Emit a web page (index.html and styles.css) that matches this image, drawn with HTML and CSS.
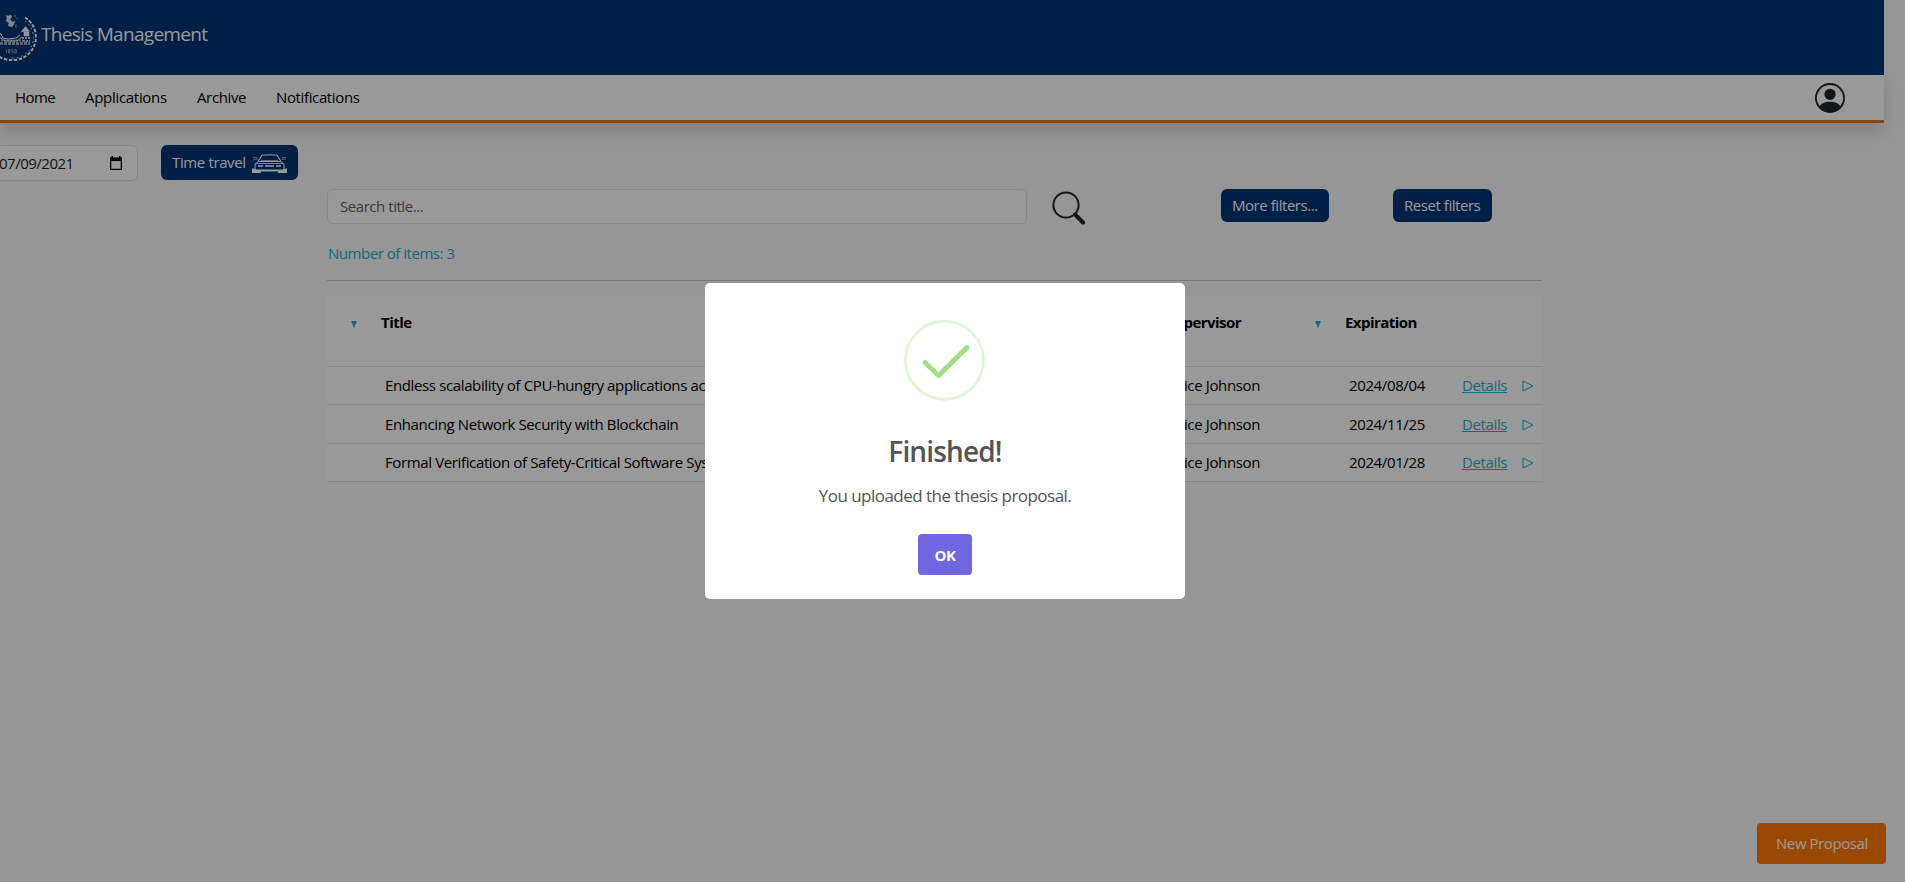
FILE: index.html
```html
<!DOCTYPE html>
<html lang="en">
<head>
<meta charset="utf-8">
<title>Thesis Management</title>
<link rel="stylesheet" href="styles.css">
</head>
<body>
<header class="topbar">
  <svg class="crest" width="50" height="50" viewBox="0 0 50 50" fill="none" stroke="#fff">
    <path d="M38 5.500A23 23 0 0 1 24 48A23 23 0 0 1 12 5.500" stroke-width="2" stroke-dasharray="3.400 1.600"/>
    <path d="M38 9A20.500 20.500 0 0 1 24 46" stroke-width="1" stroke-dasharray="1.600 3"/>
    <path d="M19 3l2 1 3-1 1 2-2 2 2 3 3-1-1 3-2 3-4-1 1-3-3-2 1-3z" fill="#fff" stroke-width=".3" opacity=".85"/>
    <path d="M28 3v2M29 12v4M30 6v1" stroke-width="1" opacity=".6"/>
    <path d="M5 22v-3M10 20l4 2 2 4 5 1 8-1 4-3M9 25l5 1 4 3h12l5-4" stroke-width="1"/>
    <path d="M5 31.500h38" stroke-width="2.800" stroke-dasharray="3 1" opacity=".6"/>
    <path d="M8 28.500h28" stroke-width="2" stroke-dasharray="2 1" opacity=".6"/>
    <path d="M34.500 19.500l4-5 4 5zM37 20v4h5v-4" fill="#fff" stroke-width=".6"/>
    <path d="M35 26h8M36 29h7" stroke-width="2" stroke-dasharray="2 1" opacity=".8"/>
    <path d="M19.500 37.500v3.500M21.500 37.500h1.500v3.500h-1.500zM26 37.500h-1.200v1.700h1.400v1.800h-1.400M27.800 37.500h1.500v3.500h-1.500z" stroke-width=".6" opacity=".8"/>
  </svg>
  <span class="brand">Thesis Management</span>
</header>
<nav class="nav">
  <a class="nav-home">Home</a><a class="nav-apps">Applications</a><a class="nav-archive">Archive</a><a class="nav-notes">Notifications</a>
  <svg class="user" width="30" height="30" viewBox="0 0 16 16" fill="#212529"><path d="M11 6a3 3 0 1 1-6 0 3 3 0 0 1 6 0"/><path fill-rule="evenodd" d="M0 8a8 8 0 1 1 16 0A8 8 0 0 1 0 8m8-7a7 7 0 0 0-5.468 11.370C3.242 11.226 4.805 10 8 10s4.757 1.225 5.468 2.370A7 7 0 0 0 8 1"/></svg>
</nav>
<section class="clock">
  <div class="date"><span>07/09/2021</span>
    <svg width="12" height="14" viewBox="0 0 12 14"><path d="M0 1.500h1.500V0H3v1.500h6V0h1.500v1.500H12V14H0zM1.300 5v7.700h9.400V5z" fill="#000" fill-rule="evenodd"/></svg>
  </div>
  <div class="btn travel"><span>Time travel</span>
    <svg width="35" height="20" viewBox="0 0 35 20" fill="none" stroke="#fff"><path d="M6 7.500L10 1.300Q17.500 .2 25 1.300l4 6.200" stroke-width="1.100"/><path d="M9 6.500h17" stroke-width=".8" opacity=".8"/><path d="M1.500 3.500H5v2H2zM33.500 3.500H30v2h3z" stroke-width=".7" opacity=".7"/><path d="M3 14v-4l3.500-2.500h22L32 10v4" stroke-width="1"/><path d="M4 9.500h27" stroke-width=".8"/><path d="M6 12h5M24 12h5M13 12h9" stroke-width="1.600"/><path d="M0 14.500h4v1h27v-1h4V19h-9v-1.500H9V19H0z" fill="#fff" stroke="none"/></svg>
  </div>
</section>
<main class="content">
  <div class="filters">
    <div class="search">Search title...</div>
    <svg class="lens" width="34" height="34" viewBox="0 0 34 34" fill="none" stroke="#212529"><circle cx="14" cy="14" r="12.600" stroke-width="2"/><path d="M23 23.500L31 31.500" stroke-width="4" stroke-linecap="round"/></svg>
    <div class="btn more"><span>More filters...</span></div>
    <div class="btn reset"><span>Reset filters</span></div>
  </div>
  <p class="count">Number of items: 3</p>
  <div class="table">
    <div class="row head"><i class="sort s1"></i><b class="c-title">Title</b><b class="c-sup">Supervisor</b><i class="sort s2"></i><b class="c-exp">Expiration</b></div>
    <div class="row"><span class="c-title">Endless scalability of CPU-hungry applications across</span><span class="c-sup">Alice Johnson</span><span class="c-exp">2024/08/04</span><a class="details">Details</a><svg class="tri" width="12" height="12" viewBox="0 0 12 12"><path d="M1 1v10L11 6z"/></svg></div>
    <div class="row tall"><span class="c-title">Enhancing Network Security with Blockchain</span><span class="c-sup">Alice Johnson</span><span class="c-exp">2024/11/25</span><a class="details">Details</a><svg class="tri" width="12" height="12" viewBox="0 0 12 12"><path d="M1 1v10L11 6z"/></svg></div>
    <div class="row"><span class="c-title">Formal Verification of Safety-Critical Software Systems</span><span class="c-sup">Alice Johnson</span><span class="c-exp">2024/01/28</span><a class="details">Details</a><svg class="tri" width="12" height="12" viewBox="0 0 12 12"><path d="M1 1v10L11 6z"/></svg></div>
  </div>
</main>
<div class="new"><span>New Proposal</span></div>
<div class="overlay">
  <div class="modal">
    <svg width="82" height="82" viewBox="0 0 82 82" fill="none"><circle cx="40.500" cy="41.300" r="39" stroke="#e4f4da" stroke-width="3"/><path d="M21 43.500L34.500 56.500 63 28.500" stroke="#a5dc86" stroke-width="5" stroke-linecap="round" stroke-linejoin="round"/></svg>
    <h2>Finished!</h2>
    <p>You uploaded the thesis proposal.</p>
    <button><span>OK</span></button>
  </div>
</div>
</body>
</html>
```
FILE: styles.css
```css
* { box-sizing: border-box; }
body { margin: 0; height: 882px; overflow: hidden; background: #fafafa; color: #000; font: 15px/24px "Open Sans", "Noto Sans", sans-serif; letter-spacing: -0.37px; white-space: nowrap; }
.topbar { width: 1884px; height: 75px; background: #003576; color: #fff; display: flex; }
.crest { margin: 12px 0 0 -13px; flex: none; }
.brand { margin: 20px 0 0 4px; font-size: 19px; line-height: 28px; letter-spacing: -0.7px; }
.nav { width: 1884px; height: 48px; background: #fff; border-bottom: 3px solid #eb7200; box-shadow: 0 8px 16px rgba(0,0,0,.15); display: flex; padding: 10px 39px 0 15px; }
.nav-home { width: 70px; letter-spacing: -0.6px; }
.nav-apps { width: 112px; letter-spacing: -0.3px; }
.nav-archive { width: 79px; }
.user { margin: -2px 0 0 auto; }
.clock { display: flex; padding-top: 22px; height: 66px; }
.date { width: 139px; height: 36px; margin-left: -1px; border: 1px solid #dee2e6; border-left: 0; border-radius: 0 6px 6px 0; background: #fff; color: #212529; display: flex; justify-content: space-between; padding: 5px 15px 0 0; letter-spacing: -0.5px; }
.date svg { margin-top: 5px; }
.btn { background: #003576; color: #fff; border-radius: 6px; display: flex; flex: none; }
.travel { margin-left: 23px; width: 137px; height: 35px; padding: 5px 11px; justify-content: space-between; }
.travel svg { margin-top: 4px; }
.content { width: 1215px; margin-left: 327px; }
.filters { display: flex; height: 35px; }
.search { flex: none; width: 700px; height: 35px; border: 1px solid #dee2e6; border-radius: 6px; background: #fff; color: #5c6167; padding: 4px 12px; letter-spacing: -0.45px; }
.lens { flex: none; margin: 2px 0 0 25px; }
.more { width: 108px; margin-left: 135px; height: 33px; padding: 4px 11px; letter-spacing: -0.45px; }
.reset { width: 99px; margin-left: 64px; height: 33px; padding: 4px 11px; letter-spacing: -0.45px; }
.count { margin: 17px 0 15px; height: 40px; padding-left: 1px; color: #17b5d8; border-bottom: 1px solid #c8c8c8; letter-spacing: -0.47px; }
.row { display: flex; height: 38px; background: #fff; border-bottom: 1px solid #dee2e6; padding-top: 6px; }
.tall { height: 39px; padding-top: 7px; }
.head { height: 71px; padding-top: 14px; letter-spacing: -0.55px; }
.row > * { flex: none; }
.row .c-title { width: 760px; margin-left: 58px; }
.c-sup { width: 173px; text-align: right; margin-left: -58px; }
.row .c-exp { margin-left: 89px; width: 113px; }
.head .c-title { margin-left: 24px; }
.head .c-sup { width: 147px; margin-left: -47px; }
.sort { border: 3.500px solid transparent; border-top: 7px solid #17b5d8; border-bottom: 0; height: 7px; margin-top: 11px; }
.s1 { margin-left: 24px; }
.s2 { margin-left: 74px; }
.head .c-exp { margin-left: 24px; }
.details { color: #17b5d8; text-decoration: underline; width: 60px; }
.tri { margin-top: 7px; fill: none; stroke: #17b5d8; stroke-width: 1; }
.new { position: absolute; left: 1757px; top: 823px; width: 129px; height: 41px; border-radius: 4px; background: #ff7b08; color: #fff; padding: 8px 19px; letter-spacing: -0.42px; }
.overlay { position: absolute; inset: 0; background: rgba(0,0,0,.4); }
.modal { position: absolute; left: 705px; top: 283px; width: 480px; height: 316px; background: #fff; border-radius: 5px; display: flex; flex-direction: column; align-items: center; padding-top: 36px; color: #545454; }
.modal h2 { margin: 30px 0 0; font-size: 28px; line-height: 40px; font-weight: 600; letter-spacing: -0.85px; }
.modal p { margin: 13px 0 0; font-size: 17px; line-height: 24px; letter-spacing: -0.53px; }
.modal button { margin: 26px 0 0; width: 54px; height: 41px; border: 0; border-radius: 4px; background: #7066e0; color: #fff; font: 700 15px "Open Sans", sans-serif; padding: 0; letter-spacing: -0.5px; }
```
